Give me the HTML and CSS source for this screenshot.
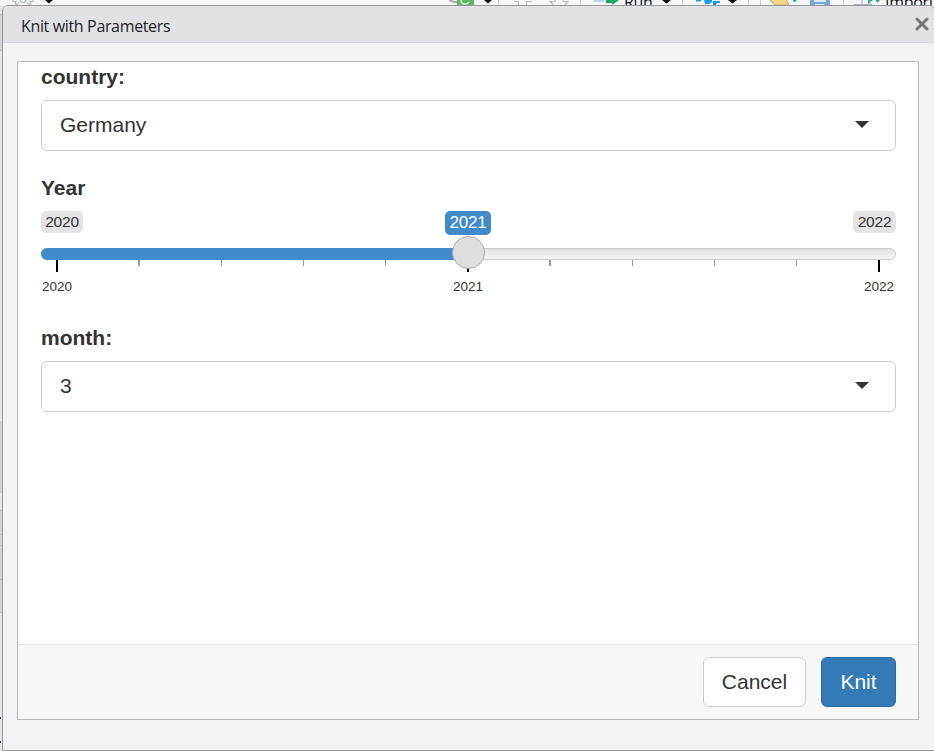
FILE: index.html
```html
<!DOCTYPE html>
<html lang="en">
<head>
<meta charset="utf-8">
<title>Knit with Parameters</title>
<link rel="stylesheet" href="styles.css">
</head>
<body>
<div class="workspace">
  <div class="toolbar">
    <svg class="toolbar-icons" width="934" height="6" viewBox="0 0 934 6">
      <g fill="none" stroke="#b7bbbd" stroke-width="1.2">
        <path d="M13 0v1.500h3l-1 2 2 1 2-2M33 0v1.500h-3l1 2-2 1-2-2M20 0a3 2.500 0 0 0 6 0"/>
        <path d="M514 1.500h4.500V6M532 1.500h-5.500V6"/>
        <path d="M555-1v2.500h-5l4 4M563-1v2.500h5l-4 4"/>
      </g>
      <path fill="#111" d="M45 0h8l-4 3.500zM484 0h8l-4 3.500zM662 0h9l-4.500 3.500zM728 0h9l-4.500 3.500z"/>
      <path d="M449 0l5 2h4" stroke="#a9abab" stroke-width="2" fill="none"/>
      <path fill="#5cb85f" d="M457 0h17v6h-17z"/>
      <path fill="none" stroke="#e9f7e9" stroke-width="1.500" d="M461 0q0 4 4 4 3 0 4-2"/>
      <path fill="#b9d2f6" d="M594 0h10v2h-10z"/>
      <path fill="#13a85c" d="M606 0h13l-7 5v-2h-6z"/>
      <path fill="#179df0" d="M696 0h5v1.500h-5zM704 0h8v2l-3 2h-4zM713 1h7v2h-3l-1 2h-3z"/>
      <path fill="#efd58a" stroke="#c8a956" d="M769-1h17l3 6h-14z"/>
      <path fill="#18a976" d="M793 0h4l-3 2.500zM868 0h5l-5 4zM876 0h4l-3 3z"/>
      <path fill="#77a8da" d="M810 0h20v6h-20z"/>
      <path fill="#dce9f7" d="M814 0h12v2h-12zM815 4h9v2h-9z"/>
      <path fill="none" stroke="#aab5c8" d="M854 4.500h18M862 0v5M870 0v5"/>
      <path fill="none" stroke="#c9cdcf" d="M498.500 0v6M580.500 0v6M682.500 0v6M748.500 0v6M760.500 0v6M843.500 0v6"/>
    </svg>
    <span class="tool-label run">Run</span>
    <span class="tool-label import">Import</span>
  </div>
  <svg class="gutter" width="2" height="745" viewBox="0 6 2 745">
    <path fill="#d3d4d5" d="M0 15h2v36H0zM0 421h2v72H0z"/>
    <path fill="#d0d4d3" d="M0 510h2v102H0z"/>
    <path fill="#b9bcbd" d="M0 14h2v1H0zM0 50h2v1H0zM0 510h2v1H0zM0 534h2v1H0zM0 545h2v1H0zM0 579h2v1H0zM0 612h2v1H0z"/>
    <path fill="#1c32d8" d="M0 717h1v2H0zM0 741h1v2H0z"/>
  </svg>

  <section class="dialog">
    <header class="titlebar">
      <h1 class="title">Knit with Parameters</h1>
      <svg class="close" width="14" height="14" viewBox="0 0 14 14"><path d="M2 2l10 10M12 2L2 12" fill="none" stroke="#777" stroke-width="3" stroke-linecap="round"/></svg>
    </header>
    <div class="panel">
      <form class="fields">
        <div class="label">country:</div>
        <div class="select"><span>Germany</span><i class="caret"></i></div>
        <div class="label year-label">Year</div>
        <div class="slider">
          <div class="limits"><span>2020</span><span class="current">2021</span><span class="max">2022</span></div>
          <div class="track"><div class="bar"></div><div class="handle"></div></div>
          <div class="ticks"><i class="major"></i><i class="wide"></i><i></i><i></i><i></i><i class="major"></i><i class="wide"></i><i></i><i></i><i></i><i class="major"></i></div>
          <div class="scale"><span>2020</span><span>2021</span><span>2022</span></div>
        </div>
        <div class="label month-label">month:</div>
        <div class="select"><span>3</span><i class="caret"></i></div>
      </form>
      <footer class="actions">
        <div class="button cancel">Cancel</div>
        <div class="button knit">Knit</div>
      </footer>
    </div>
  </section>
</div>
</body>
</html>
```

FILE: styles.css
```css
* { box-sizing: border-box; }
body {
  margin: 0;
  color: #333;
  font-family: "Liberation Sans", Arial, sans-serif;
  font-size: 21px;
}
.workspace {
  position: relative;
  width: 934px;
  height: 751px;
  overflow: hidden;
  background: #e4e6e7;
}
.toolbar {
  position: relative;
  height: 6px;
  overflow: hidden;
  background: #f4f8f9;
}
.toolbar-icons { display: block; }
.tool-label {
  position: absolute;
  top: -8px;
  color: #111;
  font: 16px/20px "Open Sans", sans-serif;
  letter-spacing: -0.3px;
}
.run { left: 624px; }
.import { left: 885px; }
.gutter { display: block; }
.dialog {
  position: absolute;
  left: 2px;
  top: 5px;
  display: flex;
  flex-direction: column;
  width: 933px;
  height: 746px;
  border: 1px solid #999;
  border-radius: 6px 6px 0 0;
  background: #f2f4f4;
  overflow: hidden;
}
.titlebar {
  display: flex;
  align-items: center;
  justify-content: space-between;
  height: 37px;
  padding: 0 5px 0 18px;
  border-bottom: 1px solid #d5d6d9;
  background: #e1e2e6;
}
.title {
  margin: 4px 0 0;
  color: #222;
  font: 400 16px/22px "Open Sans", sans-serif;
  letter-spacing: -0.35px;
}
.panel {
  display: flex;
  flex-direction: column;
  width: 902px;
  height: 659px;
  margin: 18px 0 0 14px;
  border: 1px solid #b8b8b8;
  background: #fff;
}
.fields {
  flex: 1;
  padding: 0 22px 0 23px;
}
.label {
  height: 30px;
  margin-bottom: 8px;
  font-weight: bold;
  line-height: 30px;
}
.year-label { margin: 22px 0 8px; }
.month-label { margin: 27px 0 8px; }
.select {
  display: flex;
  align-items: center;
  justify-content: space-between;
  height: 51px;
  padding: 0 26px 2px 18px;
  border: 1px solid #ccc;
  border-radius: 6px;
}
.caret {
  width: 14px;
  height: 7px;
  background: #333;
  clip-path: polygon(0 0, 100% 0, 50% 100%);
}
.slider {
  height: 85px;
}
.limits {
  display: flex;
  justify-content: space-between;
  align-items: flex-start;
  height: 37px;
  font-size: 15.5px;
  letter-spacing: -0.2px;
}
.limits span {
  width: 42px;
  height: 22px;
  border-radius: 5px;
  background: #e3e3e3;
  line-height: 22px;
  text-align: center;
}
.limits .max { width: 43px; }
.limits .current {
  width: 46px;
  height: 24px;
  background: #428bca;
  color: #fff;
  font-size: 17px;
  line-height: 23px;
}
.track {
  position: relative;
  height: 12px;
  border: 1px solid #ccc;
  border-radius: 6px;
  background: linear-gradient(#e2e2e2, #f5f5f5);
}
.bar {
  width: 428px;
  height: 12px;
  margin: -1px;
  border-radius: 6px 0 0 6px;
  background: #428bca;
}
.handle {
  position: absolute;
  z-index: 1;
  left: 410px;
  top: -13px;
  width: 33px;
  height: 33px;
  border: 1px solid #aaa;
  border-radius: 50%;
  background: #dedede;
}
.ticks {
  display: flex;
  justify-content: space-between;
  height: 18px;
  padding: 0 16px 0 15px;
}
.ticks i {
  width: 1px;
  height: 6px;
  margin: 0 0.5px;
  background: #999;
}
.ticks .wide { width: 2px; margin: 0; }
.ticks .major {
  width: 2px;
  height: 12px;
  margin: 0;
  background: #000;
}
.scale {
  display: flex;
  justify-content: space-between;
  padding: 0 2px 0 1px;
  font-size: 13.5px;
  line-height: 17px;
}
.actions {
  display: flex;
  justify-content: flex-end;
  gap: 15px;
  height: 75px;
  padding: 12px 22px 0;
  border-top: 1px solid #e5e5e5;
  background: #f7f7f7;
}
.button {
  width: 103px;
  height: 50px;
  border: 1px solid #ccc;
  border-radius: 6px;
  background: #fff;
  line-height: 48px;
  text-align: center;
}
.knit {
  width: 75px;
  border-color: #2e6da4;
  background: #337ab7;
  color: #fff;
}
```
